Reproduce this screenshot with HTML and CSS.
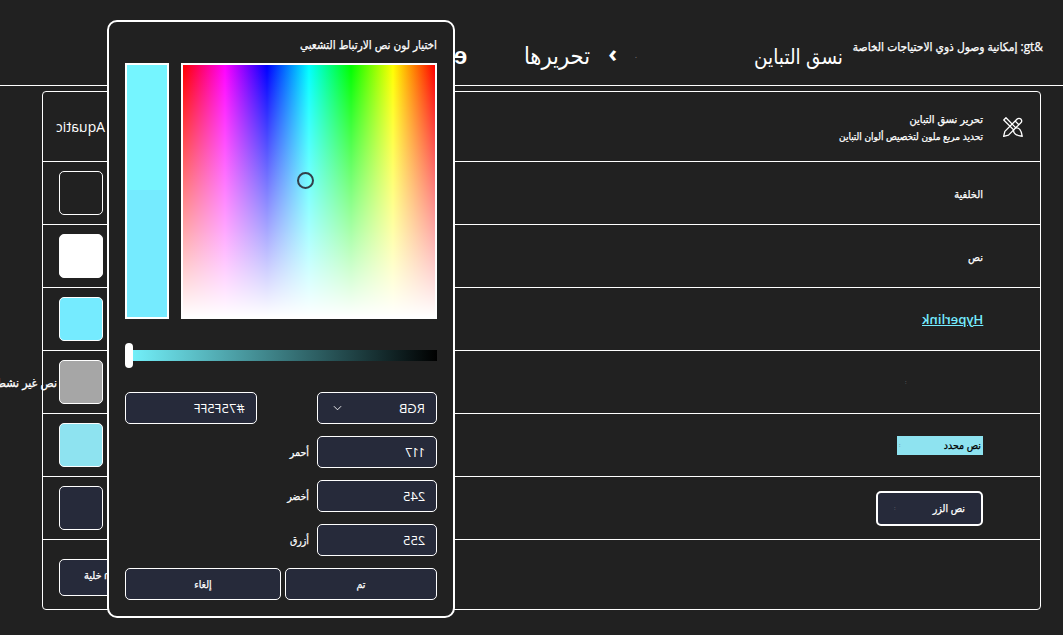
FILE: index.html
```html
<!DOCTYPE html>
<html lang="ar" dir="rtl">
<head>
<meta charset="utf-8">
<title>نسق التباين</title>
<link rel="stylesheet" href="styles.css">
</head>
<body>
<header class="topbar">
  <span class="crumb-root heavy">&amp;gt: إمكانية وصول ذوي الاحتياجات الخاصة</span>
  <h1 class="crumb-title">نسق التباين</h1>
  <span class="crumb-dot">.</span>
  <span class="crumb-sep">›</span>
  <span class="crumb-edit">تحريرها</span>
  <span class="crumb-tail mirror">e</span>
</header>

<main class="card">
  <section class="row row-tall">
    <div class="cell-main head-cell">
      <svg class="edit-icon" viewBox="0 0 20 20" aria-hidden="true">
        <path d="M1.5 18.5 L2.6 14 L13.8 2.8 a2.2 2.2 0 0 1 3.3 3.3 L5.9 17.4 Z M12 4.6 l3.3 3.3"/>
        <path d="M1.6 3.6 L3.6 1.6 L12.6 10.8 c2.6-.5 5 1.6 5.8 7.6 c-6-.7-8.4-3-7.8-5.8 Z"/>
      </svg>
      <div class="head-text heavy">
        <div class="head-title">تحرير نسق التباين</div>
        <div class="head-desc">تحديد مربع ملون لتخصيص ألوان التباين</div>
      </div>
    </div>
    <div class="cell-side"><span class="mirror theme-name">Aquatic</span></div>
  </section>

  <section class="row">
    <div class="cell-main"><span class="label heavy">الخلفية</span></div>
    <div class="cell-side"><span class="swatch sw-bg"></span></div>
  </section>
  <section class="row">
    <div class="cell-main"><span class="label heavy">نص</span></div>
    <div class="cell-side"><span class="swatch sw-text"></span></div>
  </section>
  <section class="row">
    <div class="cell-main"><a class="link mirror">Hyperlink</a></div>
    <div class="cell-side"><span class="swatch sw-link"></span></div>
  </section>
  <section class="row">
    <div class="cell-main"><span class="disabled-sample"><i class="faint">:</i></span></div>
    <div class="cell-side"><span class="swatch sw-disabled"></span><span class="side-label heavy">نص غير نشط</span></div>
  </section>
  <section class="row">
    <div class="cell-main"><span class="selected-sample heavy"><span>نص محدد</span><i class="faint">:</i></span></div>
    <div class="cell-side"><span class="swatch sw-selected"></span></div>
  </section>
  <section class="row">
    <div class="cell-main"><span class="button-sample heavy"><span>نص الزر</span><i class="faint">:</i></span></div>
    <div class="cell-side"><span class="swatch sw-button"></span></div>
  </section>
  <section class="row row-last">
    <div class="cell-main"></div>
    <div class="cell-side"><span class="wide-btn heavy"><span class="mirror">n</span><span>خلية</span></span></div>
  </section>
</main>

<aside class="picker">
  <div class="picker-title heavy">اختيار لون نص الارتباط التشعبي</div>
  <div class="picker-colors">
    <div class="spectrum"><span class="marker"></span></div>
    <div class="preview"><span class="pv-new"></span><span class="pv-old"></span></div>
  </div>
  <div class="slider"><span class="thumb"></span></div>
  <div class="form-row form-first">
    <div class="field field-select"><span class="mirror">RGB</span>
      <svg class="chev" viewBox="0 0 10 6" aria-hidden="true"><path d="M1 1 L5 5 L9 1"/></svg>
    </div>
    <div class="field field-hex"><span class="mirror">#75F5FF</span></div>
  </div>
  <div class="form-row">
    <div class="field"><span class="mirror num-narrow">117</span></div><span class="field-label heavy">أحمر</span>
  </div>
  <div class="form-row">
    <div class="field"><span class="mirror">245</span></div><span class="field-label heavy">أخضر</span>
  </div>
  <div class="form-row">
    <div class="field"><span class="mirror">255</span></div><span class="field-label heavy">أزرق</span>
  </div>
  <div class="form-actions">
    <button class="btn btn-done heavy">تم</button>
    <button class="btn btn-cancel heavy">إلغاء</button>
  </div>
</aside>
</body>
</html>
```
FILE: styles.css
```css
* { box-sizing: border-box; }
html, body { height: 100%; }
body {
  margin: 0;
  background: #212121;
  color: #fff;
  font-family: "Open Sans", "DejaVu Sans Condensed", "DejaVu Sans", sans-serif;
  font-size: 12px;
  overflow: hidden;
  position: relative;
}
.mirror { display: inline-block; transform: scaleX(-1); }
.heavy { -webkit-text-stroke: .25px currentColor; }

.topbar {
  height: 86px;
  border-bottom: 1px solid #fff;
  display: flex;
  align-items: flex-start;
  padding-right: 20px;
}
.crumb-root { font-size: 11.9px; margin-top: 38px; width: 190px; white-space: nowrap; }
.crumb-title { font-size: 20.5px; font-weight: 400; margin: 42px 10px 0 0; width: 88px; white-space: nowrap; }
.crumb-dot { font-size: 9px; color: #777; margin: 48px 118px 0 0; width: 2px; }
.crumb-sep { font-size: 24px; font-weight: 700; margin: 39px 18px 0 0; width: 8px; line-height: 1.2; }
.crumb-edit { font-size: 23.4px; margin: 39px 19px 0 0; width: 65px; white-space: nowrap; }
.crumb-tail { font-size: 24px; font-weight: 700; font-family: "Liberation Sans", sans-serif; margin: 42px 58px 0 0; }

.card {
  margin: 5px 22px 0 42px;
  height: 519px;
  border: 1px solid #fff;
  border-radius: 4px;
}
.row {
  height: 63px;
  border-bottom: 1px solid #fff;
  display: flex;
  justify-content: space-between;
  align-items: center;
  padding-right: 57px;
}
.row-tall { height: 70px; padding-right: 16px; }
.row-last { height: 69px; border-bottom: 0; }

.cell-main { flex: 1; display: flex; align-items: center; }
.cell-side { width: 60px; padding-left: 16px; display: flex; align-items: center; flex: none; }

.edit-icon { width: 22px; height: 22px; fill: none; stroke: #fff; stroke-width: 1.2; stroke-linejoin: round; margin-left: 19px; flex: none; }
.head-title { font-size: 11px; line-height: 18px; }
.head-desc { font-size: 10px; line-height: 16px; }
.theme-name { font-size: 14px; white-space: nowrap; margin-right: -2px; }

.label { font-size: 11px; }
.link { font-size: 13.1px; font-weight: 600; color: #75EBFF; text-decoration: underline; }
.faint { font-style: normal; font-size: 6px; color: #777; -webkit-text-stroke: 0; }

.swatch { width: 44px; height: 44px; flex: none; border: 1px solid #fff; border-radius: 5px; display: block; }
.sw-bg { background: #212121; }
.sw-text { background: #fff; }
.sw-link { background: #75EBFF; }
.sw-disabled { background: #A6A6A6; }
.sw-selected { background: #8EE3F0; }
.sw-button { background: #262A3A; }
.side-label { flex: none; white-space: nowrap; font-size: 12.2px; margin-right: 2px; }

.disabled-sample { width: 78px; display: flex; justify-content: flex-end; }
.selected-sample { width: 86px; height: 19px; background: #8EE3F0; color: #000; font-size: 10.5px; display: flex; justify-content: space-between; align-items: center; padding: 0 2px; }
.button-sample { width: 107px; height: 35px; background: #262A3A; border: 2px solid #fff; border-radius: 5px; display: flex; justify-content: space-between; align-items: center; font-size: 10.5px; padding: 0 16px; }

.wide-btn { width: 150px; height: 37px; flex: none; margin: 6px -106px 0 0; background: #262A3A; border: 1px solid #fff; border-radius: 5px; display: flex; align-items: center; justify-content: flex-end; gap: 2px; padding: 0 0 6px 24px; font-size: 11px; white-space: nowrap; }

.picker {
  position: absolute;
  left: 107px;
  top: 20px;
  width: 348px;
  height: 598px;
  background: #212121;
  border: 2px solid #fff;
  border-radius: 10px;
  padding: 13px 16px 16px;
}
.picker-title { font-size: 11.7px; line-height: 18px; height: 18px; margin-bottom: 10px; white-space: nowrap; }
.picker-colors { display: flex; justify-content: space-between; height: 256px; }
.spectrum {
  width: 256px;
  height: 256px;
  border: 2px solid #fff;
  position: relative;
  background:
    linear-gradient(to bottom, rgba(255,255,255,0), #fff),
    linear-gradient(to left, #f00, #ff0, #0f0, #0ff, #00f, #f0f, #f00);
}
.marker { position: absolute; left: 114px; top: 107px; width: 17px; height: 17px; border: 2px solid #33404a; border-radius: 50%; }
.preview { width: 44px; border: 2px solid #fff; display: flex; flex-direction: column; }
.pv-new { height: 125px; background: #75F5FF; }
.pv-old { flex: 1; background: #75EBFF; }

.slider { position: relative; height: 11px; margin: 31px 0 31px; background: linear-gradient(to right, #75F5FF, #000); }
.thumb { position: absolute; left: 0; top: -7px; width: 8px; height: 25px; background: #fff; border-radius: 4px; }

.form-row { display: flex; align-items: center; height: 32px; margin-bottom: 12px; }
.form-first { justify-content: space-between; }
.field {
  width: 120px;
  height: 32px;
  background: #262A3A;
  border: 1px solid #fff;
  border-radius: 5px;
  padding: 0 11px;
  display: flex;
  align-items: center;
  font-size: 13px;
}
.field-select { justify-content: space-between; }
.field-hex { width: 132px; }
.num-narrow { letter-spacing: -1px; }
.chev { width: 9px; height: 6px; fill: none; stroke: #fff; stroke-width: 1; margin-left: 4px; }
.field-label { font-size: 10.5px; margin-right: 8px; }

.form-actions { display: flex; gap: 4px; }
.btn {
  height: 32px;
  background: #262A3A;
  color: #fff;
  border: 1px solid #fff;
  border-radius: 5px;
  font: inherit;
  font-size: 10.5px;
  padding: 0;
}
.btn-done { width: 152px; }
.btn-cancel { width: 156px; }
```
